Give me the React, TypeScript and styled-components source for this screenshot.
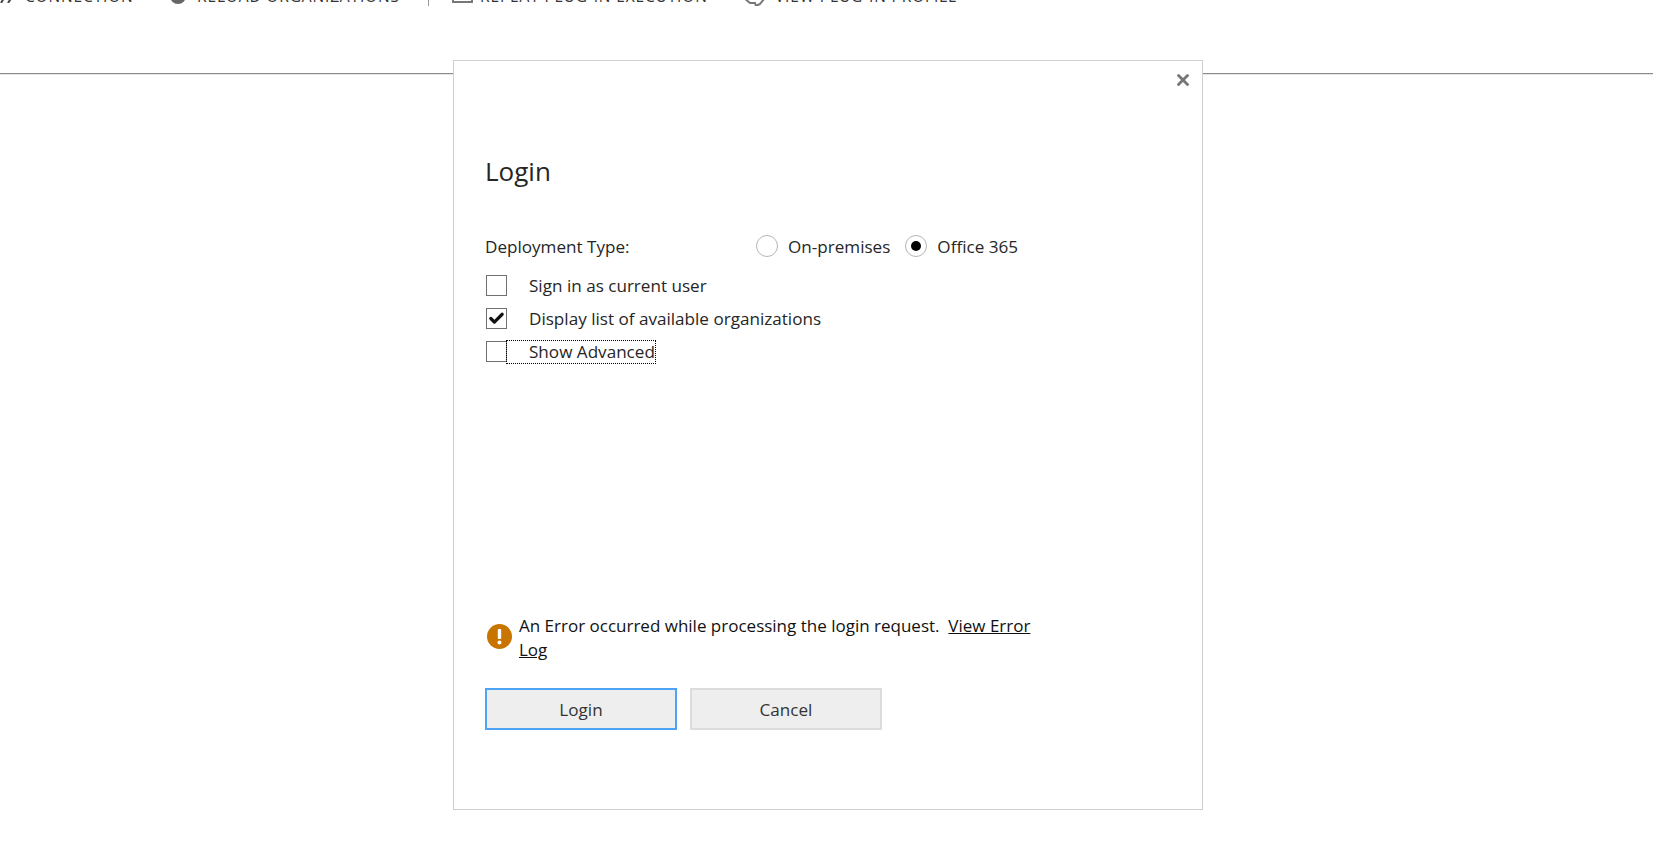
import React from "react";
import styled, { createGlobalStyle } from "styled-components";
import { Check, X } from "lucide-react";

const GlobalStyle = createGlobalStyle`
  html, body {
    margin: 0;
    padding: 0;
    background: #fff;
    overflow: hidden;
  }
  body {
    font-family: "Open Sans", "Noto Sans", "Liberation Sans", sans-serif;
    color: #262626;
  }
`;

const Page = styled.div`
  width: 1653px;
  height: 866px;
  overflow: hidden;
  position: relative;
`;

const Toolbar = styled.div`
  height: 74px;
  box-sizing: border-box;
  border-bottom: 1px solid #8a8a8a;
  box-shadow: 0 1px 0 #e6e6e6;
  overflow: hidden;
`;

// only the bottom few pixels of the toolbar are still in view
const ToolbarRow = styled.div`
  display: flex;
  align-items: flex-end;
  margin-top: -19px;
  height: 25px;
  font-size: 15.5px;
  letter-spacing: 0.85px;
  color: #333;
  white-space: nowrap;
`;

const ToolItem = styled.span<{ $width: number; $gap?: number }>`
  display: flex;
  align-items: flex-end;
  gap: ${(p) => p.$gap ?? 7}px;
  width: ${(p) => p.$width}px;
  flex: none;
  margin-bottom: 3px;
`;

const ToolLabel = styled.span`
  line-height: 22px;
  margin-bottom: -4px;
`;

const ToolIcon = styled.svg<{ $size: number; $drop: number }>`
  width: ${(p) => p.$size}px;
  height: ${(p) => p.$size}px;
  flex: none;
  margin-bottom: -${(p) => p.$drop}px;
`;

const ToolDivider = styled.span`
  width: 1px;
  height: 25px;
  background: #999;
  margin-right: 23px;
  flex: none;
`;

const Modal = styled.div`
  position: absolute;
  left: 453px;
  top: 60px;
  width: 750px;
  height: 750px;
  box-sizing: border-box;
  background: #fff;
  border: 1px solid #cfcfcf;
  padding: 92px 30px 0 31px;
  display: flex;
  flex-direction: column;
`;

const CloseButton = styled.button`
  position: absolute;
  top: 9px;
  right: 9px;
  width: 20px;
  height: 20px;
  padding: 0;
  border: 0;
  background: none;
  color: #777;
  display: flex;
  align-items: center;
  justify-content: center;
`;

const Title = styled.h1`
  margin: 0;
  font-size: 26px;
  line-height: 36px;
  font-weight: 400;
  color: #262626;
`;

const DeploymentRow = styled.div`
  display: flex;
  align-items: center;
  height: 24px;
  margin-top: 45px;
  font-size: 17.1px;
`;

const DeploymentLabel = styled.span`
  width: 271px;
`;

const RadioOption = styled.label`
  display: flex;
  align-items: center;
  gap: 10px;
  margin-right: 15px;
`;

const RadioCircle = styled.span<{ $checked?: boolean }>`
  width: 22px;
  height: 22px;
  box-sizing: border-box;
  border-radius: 50%;
  border: 1px solid #b5b5b5;
  display: flex;
  align-items: center;
  justify-content: center;
  &::after {
    content: "";
    display: ${(p) => (p.$checked ? "block" : "none")};
    width: 10px;
    height: 10px;
    border-radius: 50%;
    background: #000;
  }
`;

const CheckList = styled.div`
  display: flex;
  flex-direction: column;
  gap: 12px;
  margin-top: 17px;
`;

const CheckRow = styled.label`
  display: flex;
  align-items: center;
  height: 21px;
  font-size: 17.1px;
  margin-left: 1px;
`;

const CheckBox = styled.span`
  width: 21px;
  height: 21px;
  box-sizing: border-box;
  border: 1px solid #707070;
  display: flex;
  align-items: center;
  justify-content: center;
  color: #111;
  flex: none;
`;

const CheckText = styled.span<{ $focused?: boolean }>`
  margin-left: ${(p) => (p.$focused ? "0" : "22px")};
  padding-left: ${(p) => (p.$focused ? "22px" : "0")};
  outline: ${(p) => (p.$focused ? "1px dotted #000" : "none")};
  line-height: ${(p) => (p.$focused ? "22px" : "inherit")};
`;

const ErrorRow = styled.div`
  display: flex;
  align-items: center;
  gap: 7px;
  width: 560px;
  margin-top: 252px;
  margin-left: 2px;
  font-size: 17px;
  line-height: 24px;
  color: #111;
`;

const ErrorIcon = styled.svg`
  width: 25px;
  height: 25px;
  flex: none;
  margin-bottom: 3px;
`;

const ErrorLink = styled.a`
  color: #111;
  text-decoration: underline;
`;

const ButtonRow = styled.div`
  display: flex;
  gap: 13px;
  margin-top: 26px;
`;

const ActionButton = styled.button<{ $primary?: boolean }>`
  width: 192px;
  height: 42px;
  background: #eeeeee;
  border: 2px solid ${(p) => (p.$primary ? "#4da3f5" : "#dcdcdc")};
  font-family: inherit;
  font-size: 17.1px;
  color: #333;
  padding: 0;
`;

export default function App() {
  return (
    <Page>
      <GlobalStyle />
      <Toolbar>
        <ToolbarRow>
          <ToolItem $width={25}>
            <ToolIcon $size={14} $drop={0} viewBox="0 0 14 14">
              <path d="M1 14 L4 9 M8 14 L12 8" stroke="#444" strokeWidth="2" fill="none" />
            </ToolIcon>
          </ToolItem>
          <ToolItem $width={145}>
            <ToolLabel>CONNECTION</ToolLabel>
          </ToolItem>
          <ToolItem $width={258} $gap={11}>
            <ToolIcon $size={16} $drop={1} viewBox="0 0 16 16">
              <circle cx="8" cy="8" r="8" fill="#666" />
            </ToolIcon>
            <ToolLabel>RELOAD ORGANIZATIONS</ToolLabel>
          </ToolItem>
          <ToolDivider />
          <ToolItem $width={291}>
            <ToolIcon $size={21} $drop={0} viewBox="0 0 21 21">
              <rect x="1" y="1" width="19" height="19" fill="#fff" stroke="#777" strokeWidth="2" />
            </ToolIcon>
            <ToolLabel>REPEAT PLUG-IN EXECUTION</ToolLabel>
          </ToolItem>
          <ToolItem $width={220} $gap={10}>
            <ToolIcon $size={22} $drop={3} viewBox="0 0 22 22">
              <path d="M1 14 L7 19 L12 19 L13 22 L17 20 L21 15" stroke="#777" strokeWidth="2" fill="none" />
            </ToolIcon>
            <ToolLabel>VIEW PLUG-IN PROFILE</ToolLabel>
          </ToolItem>
        </ToolbarRow>
      </Toolbar>
      <Modal>
        <CloseButton aria-label="Close">
          <X size={18} strokeWidth={3.8} />
        </CloseButton>
        <Title>Login</Title>
        <DeploymentRow>
          <DeploymentLabel>Deployment Type:</DeploymentLabel>
          <RadioOption>
            <RadioCircle />
            On-premises
          </RadioOption>
          <RadioOption>
            <RadioCircle $checked />
            Office 365
          </RadioOption>
        </DeploymentRow>
        <CheckList>
          <CheckRow>
            <CheckBox />
            <CheckText>Sign in as current user</CheckText>
          </CheckRow>
          <CheckRow>
            <CheckBox>
              <Check size={17} strokeWidth={4.5} />
            </CheckBox>
            <CheckText>Display list of available organizations</CheckText>
          </CheckRow>
          <CheckRow>
            <CheckBox />
            <CheckText $focused>Show Advanced</CheckText>
          </CheckRow>
        </CheckList>
        <ErrorRow>
          <ErrorIcon viewBox="0 0 25 25">
            <circle cx="12.5" cy="12.5" r="12.5" fill="#c87400" />
            <rect x="10.8" y="5" width="3.4" height="10" rx="1" fill="#fff" />
            <circle cx="12.5" cy="18.5" r="2" fill="#fff" />
          </ErrorIcon>
          <span>
            An Error occurred while processing the login request.&nbsp;{" "}
            <ErrorLink href="#">View Error Log</ErrorLink>
          </span>
        </ErrorRow>
        <ButtonRow>
          <ActionButton $primary>Login</ActionButton>
          <ActionButton>Cancel</ActionButton>
        </ButtonRow>
      </Modal>
    </Page>
  );
}
